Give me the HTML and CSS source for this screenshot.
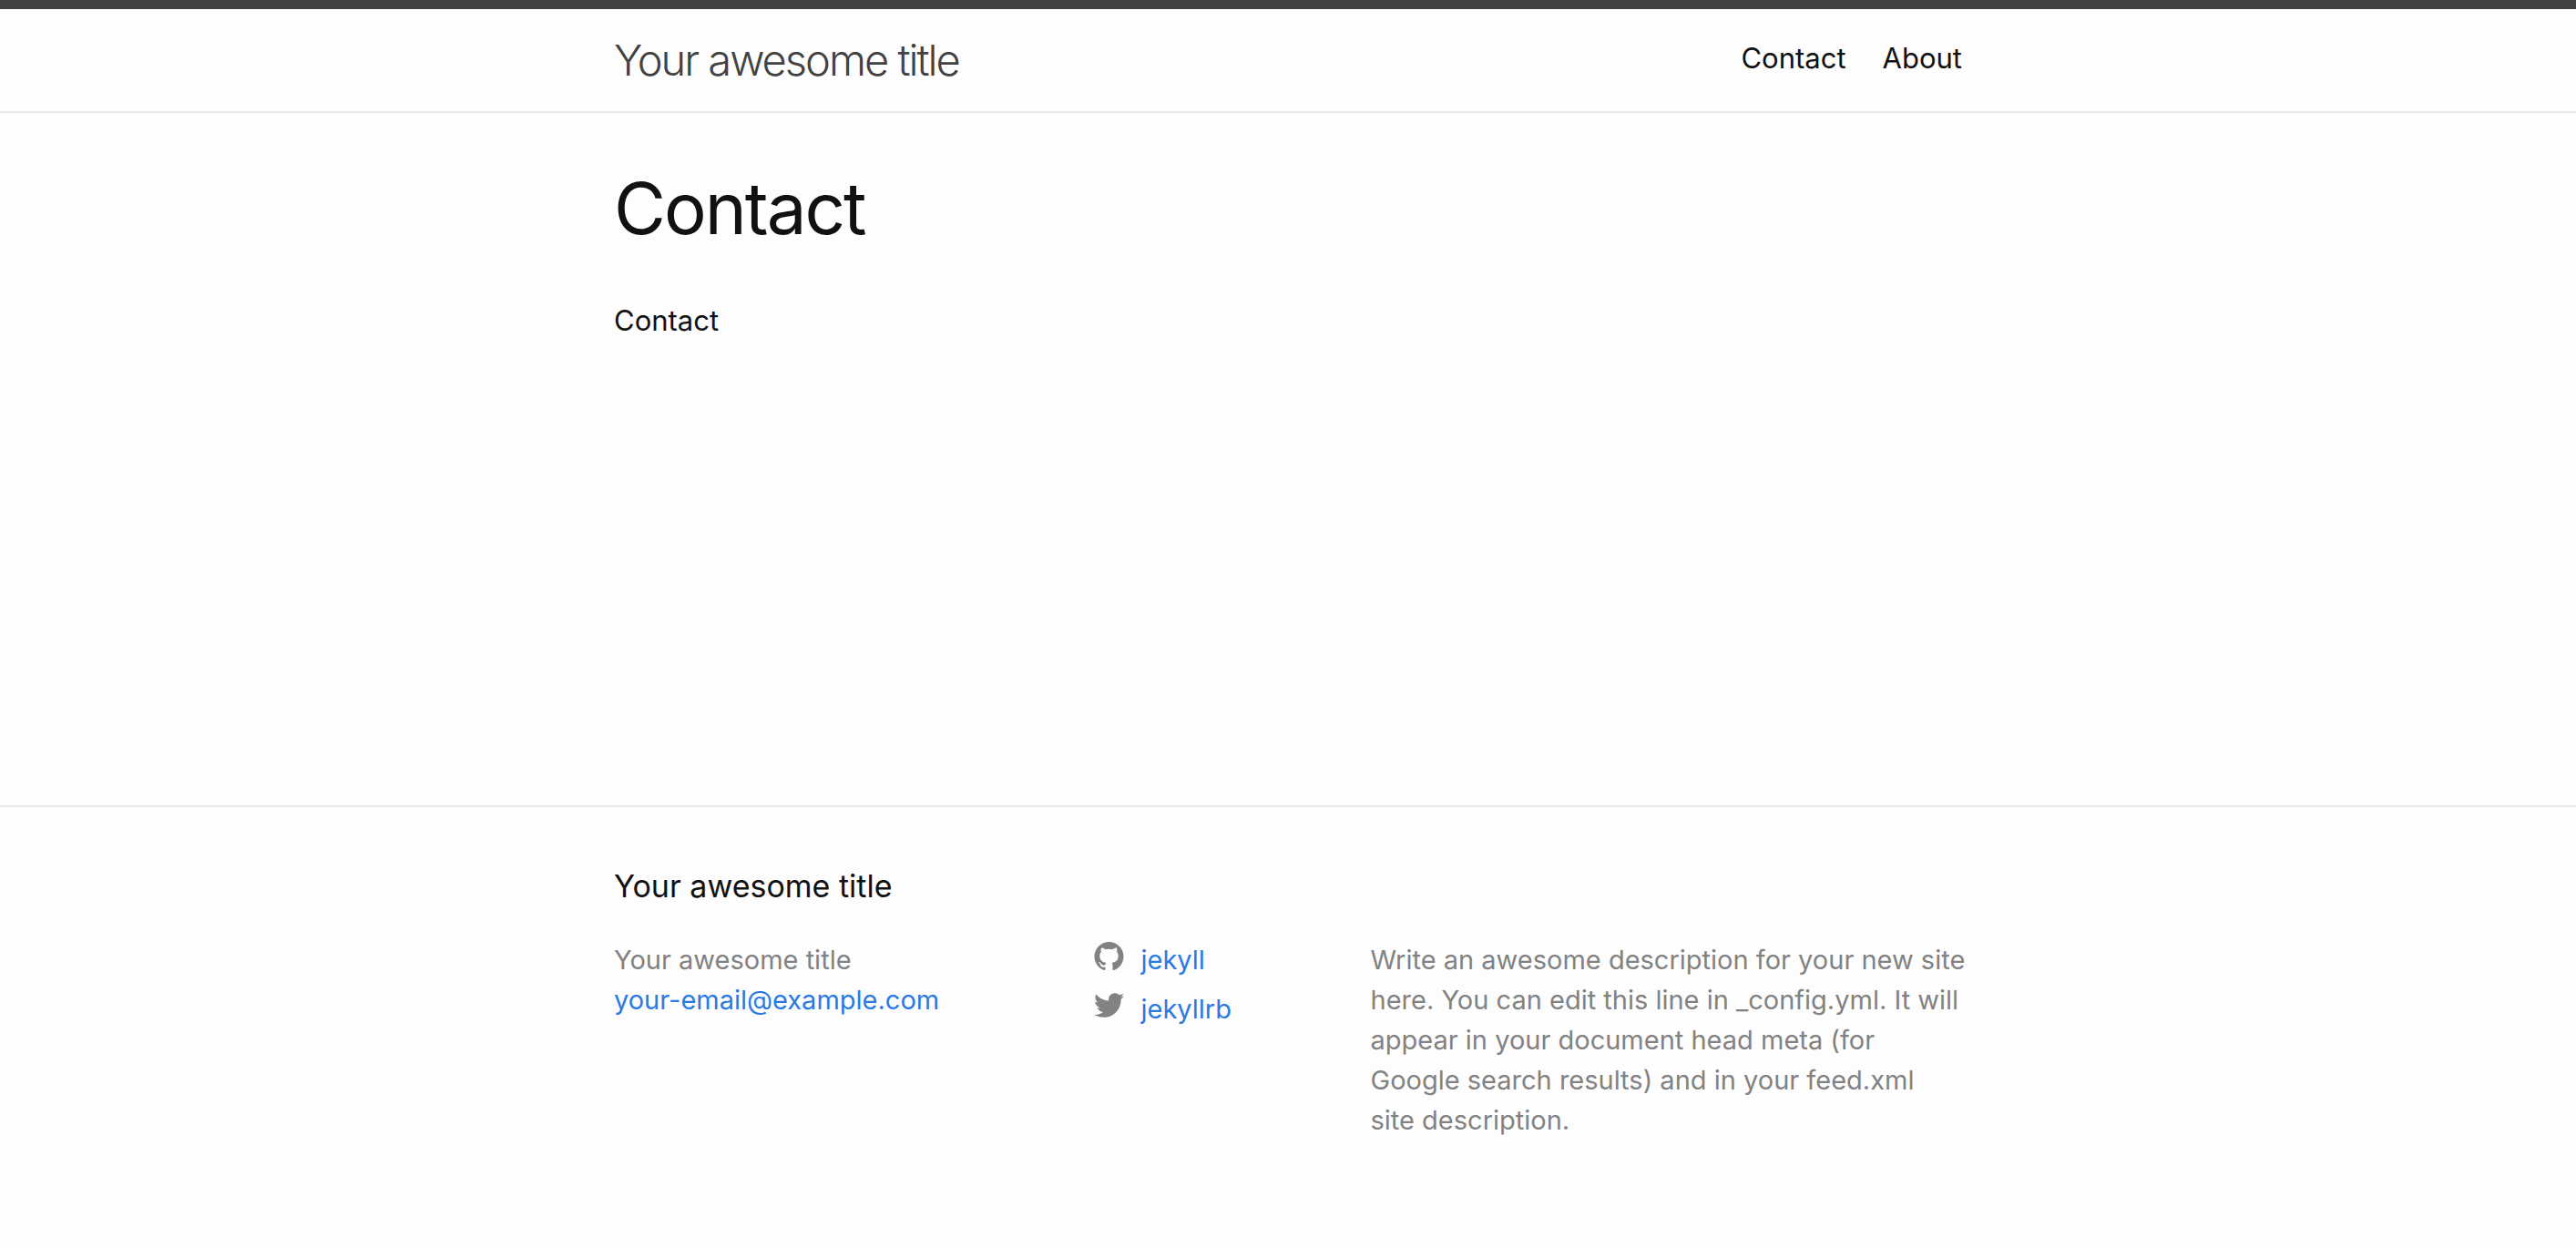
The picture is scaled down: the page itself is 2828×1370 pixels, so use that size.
FILE: index.html
```
<!DOCTYPE html>
<html lang="en">
<head>
  <meta charset="utf-8">
  <meta name="viewport" content="width=device-width, initial-scale=1">
  <title>Contact</title>
  <link rel="stylesheet" href="styles.css">
</head>
<body>
  <header class="site-header">
    <div class="wrapper header-row">
      <a class="site-title" href="#">Your awesome title</a>
      <nav class="site-nav">
        <a class="page-link" href="#">Contact</a>
        <a class="page-link" href="#">About</a>
      </nav>
    </div>
  </header>

  <main class="page-content">
    <article class="wrapper">
      <h1 class="post-title">Contact</h1>
      <p class="post-content">Contact</p>
    </article>
  </main>

  <footer class="site-footer">
    <div class="wrapper">
      <h2 class="footer-heading">Your awesome title</h2>
      <div class="footer-cols">
        <ul class="contact-list">
          <li>Your awesome title</li>
          <li><a href="mailto:your-email@example.com">your-email@example.com</a></li>
        </ul>
        <ul class="social-list">
          <li>
            <a class="social-link" href="#">
              <svg class="icon" viewBox="0 0 16 16" aria-hidden="true"><path d="M7.999,0.431c-4.285,0-7.76,3.474-7.76,7.761 c0,3.428,2.223,6.337,5.307,7.363c0.388,0.071,0.53-0.168,0.53-0.374c0-0.184-0.007-0.672-0.01-1.32 c-2.159,0.469-2.614-1.04-2.614-1.04c-0.353-0.896-0.862-1.135-0.862-1.135c-0.705-0.481,0.053-0.472,0.053-0.472 c0.779,0.055,1.189,0.8,1.189,0.8c0.692,1.186,1.816,0.843,2.258,0.645c0.071-0.502,0.271-0.843,0.493-1.037 C4.86,11.425,3.049,10.76,3.049,7.786c0-0.847,0.302-1.54,0.799-2.082C3.768,5.507,3.501,4.718,3.924,3.65 c0,0,0.652-0.209,2.134,0.796C6.677,4.273,7.34,4.187,8,4.184c0.659,0.003,1.323,0.089,1.943,0.261 c1.482-1.004,2.132-0.796,2.132-0.796c0.423,1.068,0.157,1.857,0.077,2.054c0.497,0.542,0.798,1.235,0.798,2.082 c0,2.981-1.814,3.637-3.543,3.829c0.279,0.24,0.527,0.713,0.527,1.437c0,1.037-0.01,1.874-0.01,2.129 c0,0.208,0.14,0.449,0.534,0.373c3.081-1.028,5.302-3.935,5.302-7.362C15.76,3.906,12.285,0.431,7.999,0.431z"/></svg>
              <span>jekyll</span>
            </a>
          </li>
          <li>
            <a class="social-link" href="#">
              <svg class="icon" viewBox="0 0 16 16" aria-hidden="true"><path d="M15.969,3.058c-0.586,0.26-1.217,0.436-1.878,0.515c0.675-0.405,1.194-1.045,1.438-1.809c-0.632,0.375-1.332,0.647-2.076,0.793c-0.596-0.636-1.446-1.033-2.387-1.033c-1.806,0-3.27,1.464-3.27,3.27 c0,0.256,0.029,0.506,0.085,0.745C5.163,5.404,2.753,4.102,1.14,2.124C0.859,2.607,0.698,3.168,0.698,3.767 c0,1.134,0.577,2.135,1.455,2.722C1.616,6.472,1.112,6.325,0.671,6.08c0,0.014,0,0.027,0,0.041c0,1.584,1.127,2.906,2.623,3.206 C3.02,9.402,2.731,9.442,2.433,9.442c-0.211,0-0.416-0.021-0.615-0.059c0.416,1.299,1.624,2.245,3.055,2.271 c-1.119,0.877-2.529,1.4-4.061,1.4c-0.264,0-0.524-0.015-0.78-0.046c1.447,0.928,3.166,1.469,5.013,1.469 c6.015,0,9.304-4.983,9.304-9.304c0-0.142-0.003-0.283-0.009-0.423C14.976,4.29,15.531,3.714,15.969,3.058z"/></svg>
              <span>jekyllrb</span>
            </a>
          </li>
        </ul>
        <p class="site-description">Write an awesome description for your new site here. You can edit this line in _config.yml. It will appear in your document head meta (for Google search results) and in your feed.xml <span class="keep-together">site description.</span></p>
      </div>
    </div>
  </footer>
</body>
</html>
```

FILE: styles.css
```
* {
  box-sizing: border-box;
  margin: 0;
  padding: 0;
}

body {
  display: flex;
  flex-direction: column;
  min-height: 100vh;
  background: #fdfdfd;
  color: #111;
  font-family: Inter, "Liberation Sans", sans-serif;
  font-size: 31px;
  line-height: 48px;
}

a {
  color: #2a7ae2;
  text-decoration: none;
}

a:hover {
  text-decoration: underline;
}

ul {
  list-style: none;
}

.wrapper {
  max-width: 1600px;
  margin: 0 auto;
  padding: 0 60px;
}

.site-header {
  border-top: 10px solid #424242;
  border-bottom: 2px solid #e8e8e8;
}

.header-row {
  display: flex;
  flex-wrap: wrap;
  align-items: flex-start;
  justify-content: space-between;
}

.site-title {
  color: #424242;
  font-size: 47px;
  font-weight: 350;
  letter-spacing: -2px;
  line-height: 112px;
}

.site-nav {
  display: flex;
  gap: 40px;
  line-height: 108px;
}

.page-link {
  color: #111;
}

.page-content {
  flex: 1;
  padding: 60px 0;
}

.post-title {
  margin-bottom: 54px;
  font-size: 78px;
  font-weight: 400;
  letter-spacing: -2px;
  line-height: 90px;
}

.site-footer {
  padding: 60px 0 118px;
  border-top: 2px solid #e8e8e8;
}

.footer-heading {
  margin-bottom: 32px;
  font-size: 34px;
  font-weight: 400;
  line-height: 54px;
}

.footer-cols {
  display: grid;
  grid-template-columns: 35fr 20fr 45fr;
  margin-left: -30px;
  color: #828282;
  font-size: 29px;
  line-height: 44px;
}

.footer-cols > * {
  min-width: 0;
  padding-left: 30px;
}

.footer-cols > .social-list {
  display: flex;
  flex-direction: column;
  gap: 10px;
  padding-left: 28px;
}

.social-link {
  display: flex;
  align-items: center;
  gap: 19px;
}

.icon {
  width: 33px;
  height: 33px;
  margin-bottom: 10px;
  fill: #828282;
}

.site-description {
  margin-right: -6px;
}

.keep-together {
  white-space: nowrap;
}

@media (max-width: 1200px) {
  .footer-cols {
    grid-template-columns: 1fr;
    row-gap: 30px;
  }

  .site-description {
    margin-right: 0;
  }
}
```
